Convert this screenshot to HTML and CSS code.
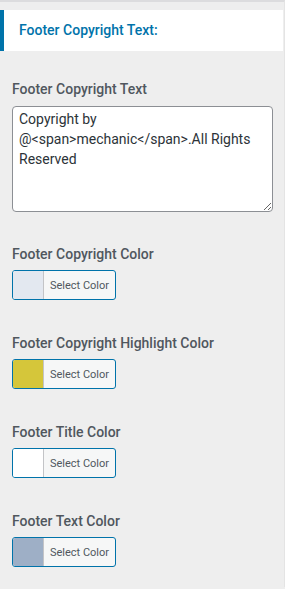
FILE: index.html
```html
<!DOCTYPE html>
<html lang="en">
<head>
    <meta charset="UTF-8">
    <meta name="viewport" content="width=device-width, initial-scale=1.0">
    <title>Footer Settings</title>
    <link rel="stylesheet" href="styles.css">
</head>
<body>
    <div class="panel">
        <h3 class="section-title">Footer Copyright Text:</h3>

        <div class="field">
            <label class="field-label" for="copyright-text">Footer Copyright Text</label>
            <textarea id="copyright-text" class="field-textarea">Copyright by @&lt;span&gt;mechanic&lt;/span&gt;.All Rights Reserved</textarea>
        </div>

        <div class="field">
            <div class="field-label">Footer Copyright Color</div>
            <button type="button" class="color-btn">
                <span class="swatch swatch-copyright"></span>
                <span class="color-text">Select Color</span>
            </button>
        </div>

        <div class="field">
            <div class="field-label">Footer Copyright Highlight Color</div>
            <button type="button" class="color-btn">
                <span class="swatch swatch-highlight"></span>
                <span class="color-text">Select Color</span>
            </button>
        </div>

        <div class="field">
            <div class="field-label">Footer Title Color</div>
            <button type="button" class="color-btn">
                <span class="swatch swatch-title"></span>
                <span class="color-text">Select Color</span>
            </button>
        </div>

        <div class="field">
            <div class="field-label">Footer Text Color</div>
            <button type="button" class="color-btn">
                <span class="swatch swatch-text"></span>
                <span class="color-text">Select Color</span>
            </button>
        </div>
    </div>
</body>
</html>
```

FILE: styles.css
```css
body {
    margin: 0;
    background-color: #eeeeee;
    font-family: Roboto, 'Noto Sans', sans-serif;
    color: #50575e;
}
.panel {
    border-top: 2px solid #dcdcde;
    border-right: 1px solid #e4e4e4;
    min-height: 587px;
    padding-top: 8px;
    box-sizing: border-box;
}
.section-title {
    margin: 0 1px 0 0;
    background-color: #fff;
    border-left: 4px solid #0073aa;
    color: #0073aa;
    font-size: 14px;
    font-weight: 500;
    height: 41px;
    line-height: 41px;
    padding-left: 15px;
}
.field {
    padding: 0 12px;
    margin-top: 33px;
}
.section-title + .field {
    margin-top: 28px;
}
.section-title + .field + .field {
    margin-top: 32px;
}
.field-label {
    display: block;
    font-size: 14px;
    font-weight: 500;
    line-height: 20px;
    margin-bottom: 6px;
}
.section-title + .field .field-label {
    margin-bottom: 7px;
}
.field-textarea {
    display: block;
    width: 261px;
    height: 106px;
    box-sizing: border-box;
    border: 1px solid #8c8f94;
    border-radius: 4px;
    padding: 2px 6px;
    font-family: Roboto, 'Noto Sans', sans-serif;
    font-size: 14px;
    line-height: 20px;
    color: #2c3338;
    background: #fff;
    resize: vertical;
}
.color-btn {
    display: flex;
    width: 104px;
    height: 30px;
    padding: 0;
    border: 1px solid #0073aa;
    border-radius: 3px;
    overflow: hidden;
    background: #f6f7f7;
    cursor: pointer;
}
.swatch {
    width: 30px;
    height: 100%;
    border-right: 1px solid #c3c4c7;
}
.swatch-copyright { background: #e3e8f0; }
.swatch-highlight { background: #d5c63a; }
.swatch-title { background: #fff; }
.swatch-text { background: #9eafc6; }
.color-text {
    flex: 1;
    align-self: center;
    font-family: Roboto, 'Noto Sans', sans-serif;
    font-size: 11px;
    color: #50575e;
    text-align: center;
}
```
